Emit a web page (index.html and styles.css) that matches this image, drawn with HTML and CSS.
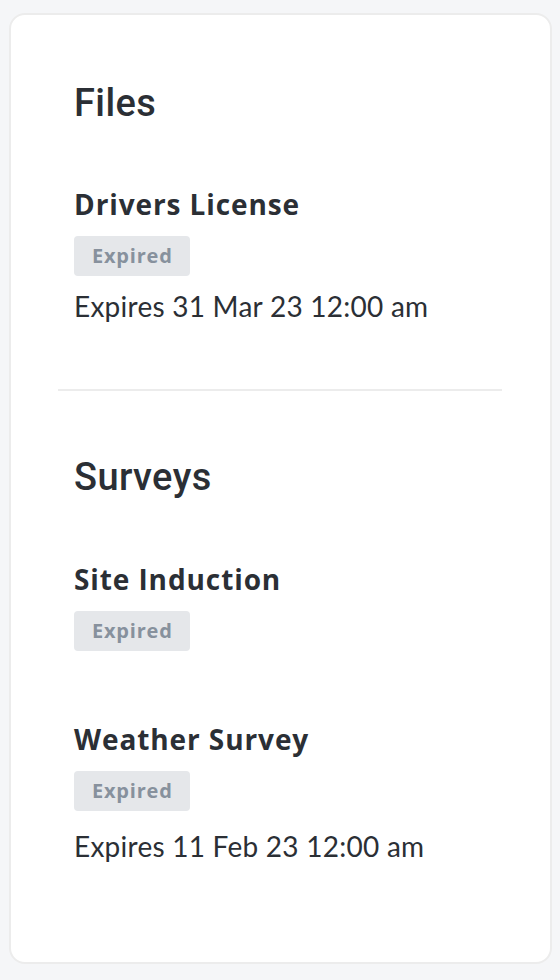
FILE: index.html
```html
<!DOCTYPE html>
<html lang="en">
<head>
<meta charset="utf-8">
<title>Files and Surveys</title>
<link rel="stylesheet" href="styles.css">
</head>
<body>
  <main class="card">
    <section class="group group--first">
      <h2 class="group-title">Files</h2>
      <div class="item">
        <h3 class="item-title">Drivers License</h3>
        <span class="badge">Expired</span>
        <p class="meta">Expires 31 Mar 23 12:00 am</p>
      </div>
    </section>
    <hr class="divider">
    <section class="group group--last">
      <h2 class="group-title">Surveys</h2>
      <div class="item">
        <h3 class="item-title">Site Induction</h3>
        <span class="badge">Expired</span>
      </div>
      <div class="item">
        <h3 class="item-title">Weather Survey</h3>
        <span class="badge">Expired</span>
        <p class="meta meta--loose">Expires 11 Feb 23 12:00 am</p>
      </div>
    </section>
  </main>
</body>
</html>
```
FILE: styles.css
```css
* { box-sizing: border-box; }

html, body {
  margin: 0;
  padding: 0;
  background: #f5f6f8;
}

body {
  padding: 13px 8px 16px 9px;
  font-family: "Lato", "Noto Sans", sans-serif;
  color: #2c3037;
}

.card {
  background: #ffffff;
  border: 2px solid #ececec;
  border-radius: 16px;
  padding: 0 48px 0 47px;
  height: 951px;
}

.group {
  padding: 64px 16px 65px;
}

.group--first {
  padding-top: 66px;
}

.group--last {
  padding-bottom: 0;
}

.group-title {
  margin: 0 0 62px;
  font-family: "Roboto", "Liberation Sans", sans-serif;
  font-weight: 500;
  font-size: 38px;
  line-height: 44px;
  letter-spacing: 0.4px;
  color: #2b2f35;
}

.group--first .group-title {
  margin-bottom: 61px;
}

.item {
  display: flex;
  flex-direction: column;
  align-items: flex-start;
}

.item + .item {
  margin-top: 70px;
}

.item-title {
  margin: 0 0 14px;
  font-family: "Open Sans", "Lato", sans-serif;
  font-weight: 700;
  font-size: 28px;
  line-height: 36px;
  letter-spacing: 0.9px;
  color: #2b2f35;
}

.badge {
  display: inline-block;
  height: 40px;
  padding: 0 17px 0 18px;
  border-radius: 4px;
  background: #e5e7ea;
  color: #87919d;
  font-family: "Open Sans", "Lato", sans-serif;
  font-weight: 700;
  font-size: 20px;
  line-height: 40px;
  letter-spacing: 0.8px;
}

.meta {
  margin: 12px 0 0;
  font-size: 28px;
  line-height: 36px;
  letter-spacing: 0.25px;
  color: #2b2f35;
}

.meta--loose {
  margin-top: 17px;
}

.divider {
  margin: 0;
  border: 0;
  border-top: 2px solid #ececec;
}
```
